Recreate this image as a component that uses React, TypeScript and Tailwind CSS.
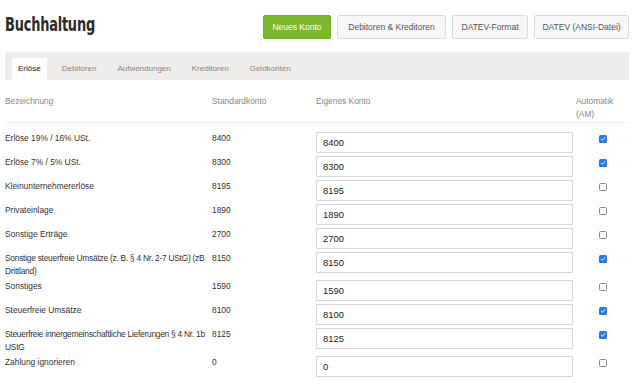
const rows = [
  { label: "Erlöse 19% / 16% USt.", std: "8400", own: "8400", auto: true },
  { label: "Erlöse 7% / 5% USt.", std: "8300", own: "8300", auto: true },
  { label: "Kleinunternehmererlöse", std: "8195", own: "8195", auto: false },
  { label: "Privateinlage", std: "1890", own: "1890", auto: false },
  { label: "Sonstige Erträge", std: "2700", own: "2700", auto: false },
  {
    label: "Sonstige steuerfreie Umsätze (z. B. § 4 Nr. 2-7 UStG) (zB\nDrittland)",
    std: "8150",
    own: "8150",
    auto: true,
  },
  { label: "Sonstiges", std: "1590", own: "1590", auto: false },
  { label: "Steuerfreie Umsätze", std: "8100", own: "8100", auto: true },
  {
    label: "Steuerfreie innergemeinschaftliche Lieferungen § 4 Nr. 1b\nUStG",
    std: "8125",
    own: "8125",
    auto: true,
  },
  { label: "Zahlung ignorieren", std: "0", own: "0", auto: false },
];

const tabs = ["Erlöse", "Debitoren", "Aufwendungen", "Kreditoren", "Geldkonten"];

function Checkbox({ checked }: { checked: boolean }) {
  if (checked) {
    return (
      <span className="flex h-[8px] w-[8px] items-center justify-center rounded-[1.5px] bg-[#1f7cf0]">
        <svg width="6" height="6" viewBox="0 0 10 10" fill="none">
          <path
            d="M2 5.2l2 2 4-4.6"
            stroke="white"
            strokeWidth="1.6"
            strokeLinecap="round"
            strokeLinejoin="round"
          />
        </svg>
      </span>
    );
  }
  return (
    <span className="block h-[8px] w-[8px] rounded-[1.5px] border border-[#8a8a8a] bg-white" />
  );
}

export default function App() {
  return (
    <div className="min-h-screen bg-white font-['Liberation_Sans',Arial,sans-serif] text-[#333]">
      <div className="ml-[5px] w-[624px]">
        <header className="flex items-start justify-between">
          <h1 className="inline-block origin-left scale-x-[0.72] pt-3 font-['DejaVu_Sans_Condensed','DejaVu_Sans',sans-serif] text-[20px] font-bold leading-[24px] tracking-[-0.3px] text-[#2b2b2b]">
            Buchhaltung
          </h1>
          <div className="mt-[15px] flex gap-[6px] text-[8.5px]">
            <button className="flex h-[24px] w-[68px] items-center justify-center rounded-[2px] border border-[#74b02a] bg-[#7bb82e] text-white">
              Neues Konto
            </button>
            <button className="flex h-[24px] w-[109px] items-center justify-center rounded-[2px] border border-[#dcdcdc] bg-[#f7f7f7] text-[#555]">
              Debitoren &amp; Kreditoren
            </button>
            <button className="flex h-[24px] w-[76px] items-center justify-center rounded-[2px] border border-[#dcdcdc] bg-[#f7f7f7] text-[#555]">
              DATEV-Format
            </button>
            <button className="flex h-[24px] w-[95px] items-center justify-center rounded-[2px] border border-[#dcdcdc] bg-[#f7f7f7] text-[#555]">
              DATEV (ANSI-Datei)
            </button>
          </div>
        </header>

        <nav className="mt-[13px] flex h-[28px] items-end gap-[9px] bg-[#eeedeb] pl-[7px] text-[8px]">
          {tabs.map((t, i) => (
            <div
              key={t}
              className={
                i === 0
                  ? "flex h-[22px] items-center bg-white px-[6px] text-[#222]"
                  : "flex h-[22px] items-center px-[6px] text-[#8c867e]"
              }
            >
              {t}
            </div>
          ))}
        </nav>

        <div className="mt-[15px] text-[8.4px] leading-[12.5px]">
          <div className="grid grid-cols-[207px_104px_260px_53px] border-b border-[#f0f0f0] pb-[1.5px] text-[#888]">
            <div>Bezeichnung</div>
            <div>Standardkonto</div>
            <div>Eigenes Konto</div>
            <div>
              Automatik
              <br />
              (AM)
            </div>
          </div>

          <div className="pt-[9.5px]">
            {rows.map((r) => (
              <div
                key={r.label}
                className="grid grid-cols-[207px_104px_260px_53px] items-start pb-[3px]"
              >
                <div
                  className={
                    r.label.includes("\n")
                      ? "whitespace-pre tracking-[-0.25px]"
                      : "whitespace-pre"
                  }
                >
                  {r.label}
                </div>
                <div>{r.std}</div>
                <div>
                  <input
                    readOnly
                    value={r.own}
                    className="h-[21px] w-[257px] border border-[#d8d8d8] bg-white pl-[6px] text-[9.4px] text-[#222] outline-none"
                  />
                </div>
                <div className="flex h-[14px] items-center justify-center">
                  <Checkbox checked={r.auto} />
                </div>
              </div>
            ))}
          </div>
        </div>
      </div>
    </div>
  );
}
